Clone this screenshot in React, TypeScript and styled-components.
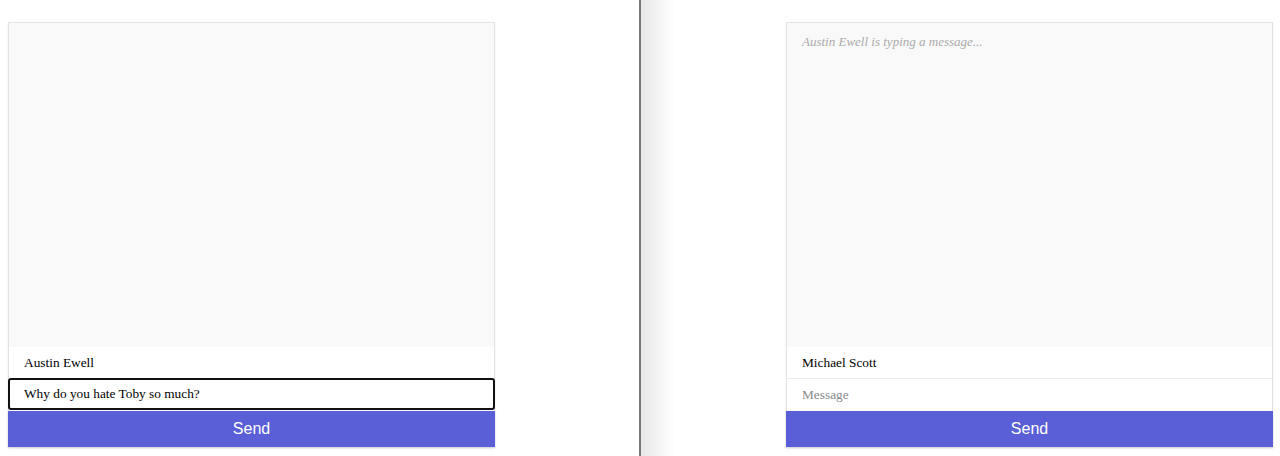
import React from "react";
import styled, { createGlobalStyle } from "styled-components";

const GlobalStyle = createGlobalStyle`
	html, body {
		margin: 0;
		padding: 0;
		background: #ffffff;
	}
	body {
		font-family: "Liberation Serif", "Times New Roman", serif;
	}
`;

const Page = styled.div`
	display: flex;
	width: 1280px;
	height: 456px;
	overflow: hidden;
`;

const Pane = styled.div<{ $align: "start" | "end" }>`
	flex: 1;
	display: flex;
	justify-content: ${({ $align }) => ($align === "start" ? "flex-start" : "flex-end")};
	padding: 22px 7px 0 8px;
	box-sizing: border-box;
`;

const Divider = styled.div`
	position: relative;
	width: 2px;
	flex: none;
	background: #777777;
	z-index: 1;

	&::after {
		content: "";
		position: absolute;
		top: 0;
		bottom: 0;
		left: 2px;
		width: 34px;
		background: linear-gradient(to right, rgba(0, 0, 0, 0.09), rgba(0, 0, 0, 0));
		pointer-events: none;
	}
`;

const ChatWindow = styled.div`
	width: 487px;
	height: 425px;
	display: flex;
	flex-direction: column;
	border: 1px solid #e3e3e3;
	border-bottom: none;
	box-sizing: border-box;
	box-shadow: 0 1px 2px rgba(0, 0, 0, 0.08);
`;

const Messages = styled.div`
	flex: 1;
	background: #f9f9f9;
	padding: 11px 16px 12px 15px;
`;

const Typing = styled.p`
	margin: 0;
	font-style: italic;
	font-size: 13px;
	color: #aaaaaa;
`;

const NameField = styled.input`
	height: 31px;
	border: none;
	outline: none;
	padding: 0 15px;
	font-family: "Liberation Serif", serif;
	font-size: 13.33px;
	color: #000000;
	background: #ffffff;
`;

const MessageField = styled.input<{ $focused?: boolean }>`
	height: 32px;
	box-sizing: border-box;
	margin: 0 ${({ $focused }) => ($focused ? "-1px" : "0")};
	padding: 0 ${({ $focused }) => ($focused ? "14px" : "15px")};
	font-family: "Liberation Serif", serif;
	font-size: 13.33px;
	color: #000000;
	background: #ffffff;
	outline: none;
	border: ${({ $focused }) => ($focused ? "2px solid #111111" : "none")};
	border-top: ${({ $focused }) => ($focused ? "2px solid #111111" : "1px solid #ececec")};
	border-radius: ${({ $focused }) => ($focused ? "3px" : "0")};

	&::placeholder {
		color: #8a8a8a;
	}
`;

const SendButton = styled.button`
	height: 36px;
	margin: 1px -1px 0;
	border: none;
	background: #5a5fd8;
	color: #ffffff;
	font-family: "Liberation Sans", Arial, sans-serif;
	font-size: 16px;
	cursor: pointer;
	box-shadow: 0 1px 2px rgba(0, 0, 0, 0.15);
`;

type ChatProps = {
	name: string;
	message?: string;
	typing?: string;
	focused?: boolean;
};

const Chat = (props: ChatProps) => {
	return (
		<ChatWindow>
			<Messages>{props.typing && <Typing>{props.typing}</Typing>}</Messages>
			<NameField defaultValue={props.name} />
			<MessageField
				$focused={props.focused}
				defaultValue={props.message}
				placeholder="Message"
			/>
			<SendButton>Send</SendButton>
		</ChatWindow>
	);
};

export default function App() {
	return (
		<>
			<GlobalStyle />
			<Page>
				<Pane $align="start">
					<Chat name="Austin Ewell" message="Why do you hate Toby so much?" focused />
				</Pane>
				<Divider />
				<Pane $align="end">
					<Chat name="Michael Scott" typing="Austin Ewell is typing a message..." />
				</Pane>
			</Page>
		</>
	);
}
